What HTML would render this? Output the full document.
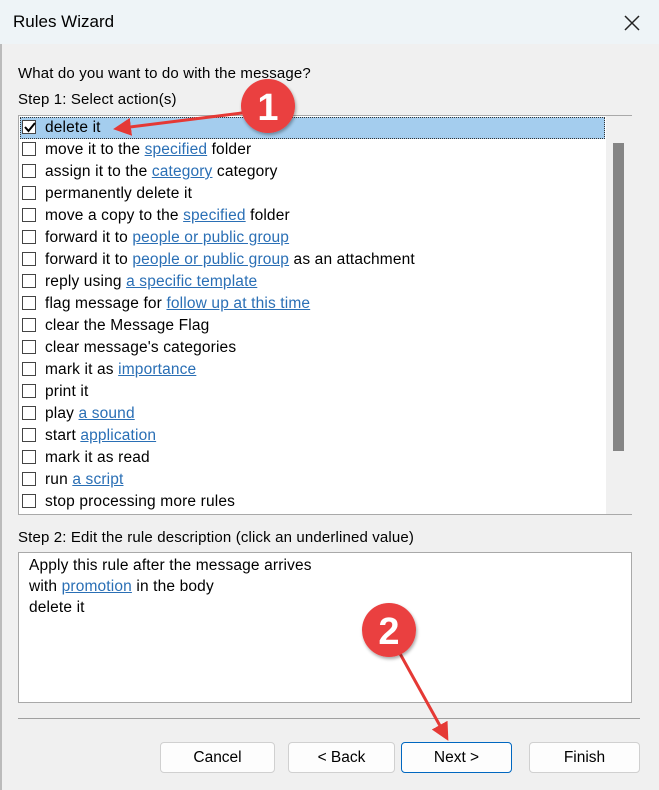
<!DOCTYPE html>
<html><head><style>
*{margin:0;padding:0;box-sizing:border-box}
body{width:659px;height:790px;background:#f0f0f0;font-family:"Liberation Sans",sans-serif;font-size:15px;color:#000;position:relative;overflow:hidden}
.title{position:absolute;left:0;top:0;width:659px;height:44px;background:#eef4f7}
.t{position:absolute;white-space:nowrap;letter-spacing:0.15px}
a{color:#2a6fb5;text-decoration:underline}
.list{position:absolute;left:18px;top:115px;width:614px;height:400px;background:#fff;border:1px solid #a9a9a9}
.row{position:absolute;left:0;height:22px;width:586px}
.cb{position:absolute;left:3px;top:4px;width:14px;height:14px;border:1px solid #444;background:#fff}
.rt{position:absolute;left:26px;top:3px;white-space:nowrap;font-size:15.5px;letter-spacing:0.15px}
.sb{position:absolute;left:587px;top:0;width:26px;height:398px;background:#f0f0f0}
.th{position:absolute;left:7px;top:27px;width:11px;height:308px;background:#858585}
.desc{position:absolute;left:18px;top:552px;width:614px;height:151px;background:#fff;border:1px solid #a9a9a9}
.desc .t{font-size:15.5px}
.btn{position:absolute;top:742px;height:31px;background:#fdfdfd;border:1px solid #d0d0d0;border-radius:4px;text-align:center;line-height:29px;font-size:15.5px}
</style></head><body>
<div style="position:absolute;left:0;top:0;width:2px;height:790px;background:#bbb"></div>
<div class="title"></div>
<div class="t" style="left:13px;top:12px;font-size:17px;letter-spacing:0">Rules Wizard</div>
<svg style="position:absolute;left:623px;top:14px" width="18" height="18"><path d="M2 2L16 16M16 2L2 16" stroke="#222" stroke-width="1.5"/></svg>
<div class="t" style="left:18px;top:65px">What do you want to do with the message?</div>
<div class="t" style="left:18px;top:91px">Step 1: Select action(s)</div>
<div class="list">
<div class="row" style="top:1px;background:#a4cdee;border:1px dotted #333;left:1px;width:585px"></div>
<div class="row" style="top:0"><div class="cb"></div><svg style="position:absolute;left:5px;top:6px" width="12" height="11"><path d="M1 5L4.5 9L11 1" stroke="#000" stroke-width="2" fill="none"/></svg><div class="rt">delete it</div></div>
<div class="row" style="top:22px"><div class="cb"></div><div class="rt">move it to the <a>specified</a> folder</div></div>
<div class="row" style="top:44px"><div class="cb"></div><div class="rt">assign it to the <a>category</a> category</div></div>
<div class="row" style="top:66px"><div class="cb"></div><div class="rt">permanently delete it</div></div>
<div class="row" style="top:88px"><div class="cb"></div><div class="rt">move a copy to the <a>specified</a> folder</div></div>
<div class="row" style="top:110px"><div class="cb"></div><div class="rt">forward it to <a>people or public group</a></div></div>
<div class="row" style="top:132px"><div class="cb"></div><div class="rt">forward it to <a>people or public group</a> as an attachment</div></div>
<div class="row" style="top:154px"><div class="cb"></div><div class="rt">reply using <a>a specific template</a></div></div>
<div class="row" style="top:176px"><div class="cb"></div><div class="rt">flag message for <a>follow up at this time</a></div></div>
<div class="row" style="top:198px"><div class="cb"></div><div class="rt">clear the Message Flag</div></div>
<div class="row" style="top:220px"><div class="cb"></div><div class="rt">clear message's categories</div></div>
<div class="row" style="top:242px"><div class="cb"></div><div class="rt">mark it as <a>importance</a></div></div>
<div class="row" style="top:264px"><div class="cb"></div><div class="rt">print it</div></div>
<div class="row" style="top:286px"><div class="cb"></div><div class="rt">play <a>a sound</a></div></div>
<div class="row" style="top:308px"><div class="cb"></div><div class="rt">start <a>application</a></div></div>
<div class="row" style="top:330px"><div class="cb"></div><div class="rt">mark it as read</div></div>
<div class="row" style="top:352px"><div class="cb"></div><div class="rt">run <a>a script</a></div></div>
<div class="row" style="top:374px"><div class="cb"></div><div class="rt">stop processing more rules</div></div>
<div class="sb"><div class="th"></div></div>
</div>
<div class="t" style="left:18px;top:529px">Step 2: Edit the rule description (click an underlined value)</div>
<div class="desc">
<div class="t" style="left:10px;top:4px">Apply this rule after the message arrives</div>
<div class="t" style="left:10px;top:25px">with <a>promotion</a> in the body</div>
<div class="t" style="left:10px;top:46px">delete it</div>
</div>
<div style="position:absolute;left:18px;top:718px;width:622px;height:1px;background:#a0a0a0"></div>
<div class="btn" style="left:160px;width:115px">Cancel</div>
<div class="btn" style="left:288px;width:107px">&lt; Back</div>
<div class="btn" style="left:401px;width:111px;border:1px solid #0067c0">Next &gt;</div>
<div class="btn" style="left:529px;width:111px">Finish</div>
<svg style="position:absolute;left:0;top:0" width="659" height="790">
<defs><marker id="ah" markerWidth="6" markerHeight="6" refX="3" refY="3" orient="auto"><path d="M0 0L6 3L0 6z" fill="#e53935"/></marker>
<filter id="sh"><feDropShadow dx="1" dy="2" stdDeviation="1.5" flood-opacity="0.35"/></filter></defs>
<line x1="250" y1="112" x2="122" y2="128" stroke="#e53935" stroke-width="3" marker-end="url(#ah)"/>
<line x1="398" y1="650" x2="444" y2="733" stroke="#e53935" stroke-width="3" marker-end="url(#ah)"/>
<circle cx="268" cy="106" r="27" fill="#ea3f3f" filter="url(#sh)"/>
<text x="268" y="120" text-anchor="middle" font-family="Liberation Sans" font-weight="bold" font-size="38" fill="#fff">1</text>
<circle cx="389" cy="630" r="27" fill="#ea3f3f" filter="url(#sh)"/>
<text x="389" y="644" text-anchor="middle" font-family="Liberation Sans" font-weight="bold" font-size="38" fill="#fff">2</text>
</svg>
</body></html>
